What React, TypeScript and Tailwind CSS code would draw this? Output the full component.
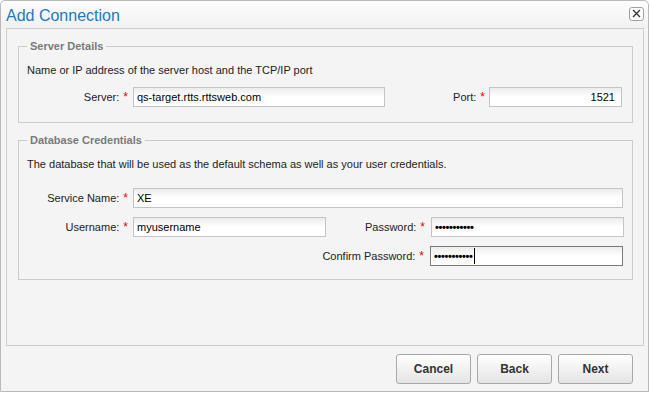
import React from "react";

const font = { fontFamily: '"Liberation Sans", Arial, sans-serif' };

function Label({ text, w }: { text: string; w: string }) {
  return (
    <div className={`${w} shrink-0 whitespace-nowrap flex justify-end items-center text-[11px] text-[#222] leading-[14px]`}>
      <span>{text}</span>
      <span className="text-[#e00] ml-[4px] text-[12px]">*</span>
    </div>
  );
}

function Field({
  w,
  value,
  right,
}: {
  w: string;
  value: string;
  right?: boolean;
}) {
  return (
    <div
      className={`${w} shrink-0 h-[20px] border border-[#c4c4c4] bg-gradient-to-b from-[#ececec] via-white to-white flex items-center ${right ? "justify-end pr-[6px]" : "pl-[3px]"} text-[11px] text-black`}
    >
      <span className="leading-[14px]">{value}</span>
    </div>
  );
}

function PwField({ focused }: { focused?: boolean }) {
  return (
    <div
      className={`w-[193px] shrink-0 h-[20px] border ${focused ? "border-[#7a7a7a]" : "border-[#c4c4c4]"} bg-gradient-to-b from-[#ececec] via-white to-white flex items-center pl-[3px]`}
    >
      <span className="text-[11px] font-bold leading-[14px] tracking-[-0.35px] text-black">•••••••••••</span>
      {focused && <span className="w-px h-[16px] bg-black ml-[1px]" />}
    </div>
  );
}

function Button({ children }: { children: React.ReactNode }) {
  return (
    <button className="w-[75px] h-[30px] rounded-[3px] border border-[#a8a8a8] bg-gradient-to-b from-white to-[#e4e4e4] text-[12px] font-bold text-[#333] shadow-[inset_0_1px_0_#fff]">
      {children}
    </button>
  );
}

export default function App() {
  return (
    <div className="w-[651px] h-[393px] bg-white" style={font}>
      <div className="w-[649px] h-[392px] border border-[#b9b9b9] rounded-t-[5px] bg-[#f4f4f4] flex flex-col">
        <div className="h-[27px] flex items-center justify-between bg-gradient-to-b from-[#fdfdfd] to-[#f1f1f1] rounded-t-[5px] pl-[5px] pr-[4px]">
          <span className="text-[16px] text-[#1f78c1] leading-[20px] mt-[2px]">Add Connection</span>
          <div className="w-[15px] h-[14px] border border-[#a0a0a0] rounded-[3px] bg-white flex items-center justify-center mb-[2px]">
            <svg width="9" height="9" viewBox="0 0 9 9">
              <path d="M1 1L8 8M8 1L1 8" stroke="#333" strokeWidth="1.3" />
            </svg>
          </div>
        </div>
        <div className="ml-[5px] w-[638px] h-[318px] border border-[#cdcdcd] bg-[#f4f4f4] pl-[11px] pt-[11px]">
          <fieldset className="w-[615px] border border-[#cbcbcb] pl-[8px] pt-[10px] pb-[15px]">
            <legend className="px-[3px] text-[11px] font-bold text-[#7a7a7a] leading-[13px]">Server Details</legend>
            <div className="text-[11px] text-[#222] leading-[14px]">
              Name or IP address of the server host and the TCP/IP port
            </div>
            <div className="flex items-center mt-[10px]">
              <Label text="Server:" w="w-[101px]" />
              <div className="w-[5px]" />
              <Field w="w-[252px]" value="qs-target.rtts.rttsweb.com" />
              <Label text="Port:" w="w-[100px]" />
              <div className="w-[4px]" />
              <Field w="w-[133px]" value="1521" right />
            </div>
          </fieldset>
          <fieldset className="w-[615px] border border-[#cbcbcb] pl-[8px] pt-[10px] pb-[13px] mt-[11px]">
            <legend className="px-[3px] text-[11px] font-bold text-[#7a7a7a] leading-[13px]">Database Credentials</legend>
            <div className="text-[11px] text-[#222] leading-[14px]">
              The database that will be used as the default schema as well as your user credentials.
            </div>
            <div className="flex flex-col gap-[9px] mt-[17px]">
              <div className="flex items-center">
                <Label text="Service Name:" w="w-[101px]" />
                <div className="w-[5px]" />
                <Field w="w-[490px]" value="XE" />
              </div>
              <div className="flex items-center">
                <Label text="Username:" w="w-[101px]" />
                <div className="w-[5px]" />
                <Field w="w-[193px]" value="myusername" />
                <Label text="Password:" w="w-[99px]" />
                <div className="w-[6px]" />
                <PwField />
              </div>
              <div className="flex items-center">
                <div className="w-[298px] shrink-0" />
                <Label text="Confirm Password:" w="w-[99px]" />
                <div className="w-[6px]" />
                <PwField focused />
              </div>
            </div>
          </fieldset>
        </div>
        <div className="flex justify-end gap-[6px] mt-[8px] pr-[15px]">
          <Button>Cancel</Button>
          <Button>Back</Button>
          <Button>Next</Button>
        </div>
      </div>
    </div>
  );
}
